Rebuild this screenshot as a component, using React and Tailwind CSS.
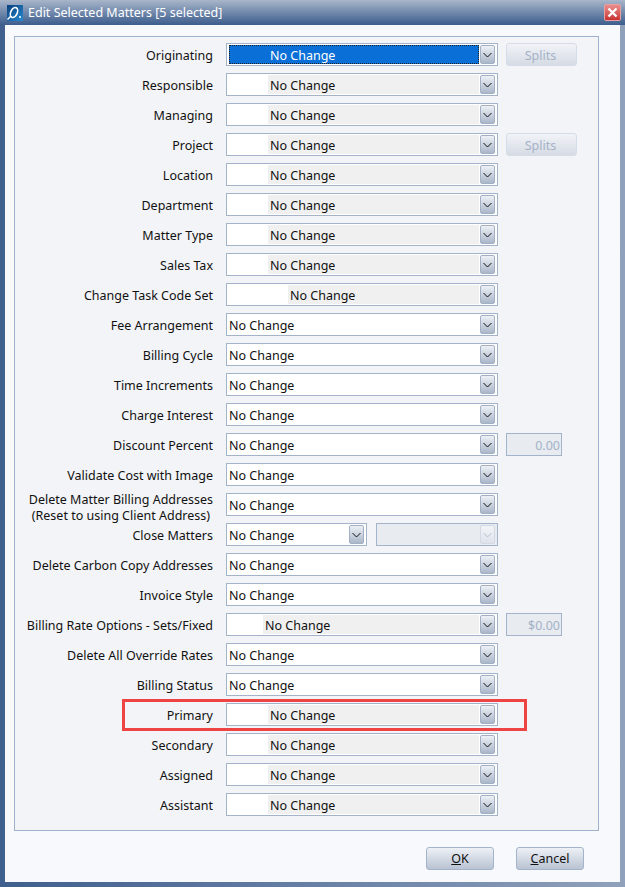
const rows = [
  { label: "Originating", text: "No Change", kind: "selected", extra: "splits" },
  { label: "Responsible", text: "No Change", kind: "gray" },
  { label: "Managing", text: "No Change", kind: "gray" },
  { label: "Project", text: "No Change", kind: "gray", extra: "splits" },
  { label: "Location", text: "No Change", kind: "gray" },
  { label: "Department", text: "No Change", kind: "gray" },
  { label: "Matter Type", text: "No Change", kind: "gray" },
  { label: "Sales Tax", text: "No Change", kind: "gray" },
  { label: "Change Task Code Set", text: "No Change", kind: "grayWide" },
  { label: "Fee Arrangement", text: "No Change" },
  { label: "Billing Cycle", text: "No Change" },
  { label: "Time Increments", text: "No Change" },
  { label: "Charge Interest", text: "No Change" },
  { label: "Discount Percent", text: "No Change", extra: "0.00" },
  { label: "Validate Cost with Image", text: "No Change" },
  { label: "Delete Matter Billing Addresses", label2: "(Reset to using Client Address)", text: "No Change" },
  { label: "Close Matters", text: "No Change", split: true },
  { label: "Delete Carbon Copy Addresses", text: "No Change" },
  { label: "Invoice Style", text: "No Change" },
  { label: "Billing Rate Options - Sets/Fixed", text: "No Change", kind: "grayNarrow", extra: "$0.00" },
  { label: "Delete All Override Rates", text: "No Change" },
  { label: "Billing Status", text: "No Change" },
  { label: "Primary", text: "No Change", kind: "gray", marked: true },
  { label: "Secondary", text: "No Change", kind: "gray" },
  { label: "Assigned", text: "No Change", kind: "gray" },
  { label: "Assistant", text: "No Change", kind: "gray" },
];

function Arrow({ disabled }) {
  return (
    <div
      className={
        disabled
          ? "w-[15px] h-[19px] shrink-0 rounded-[2px] border border-[#d3d9e2] bg-gradient-to-b from-[#f2f4f7] to-[#dfe3ea] flex items-center justify-center"
          : "w-[15px] h-[19px] shrink-0 rounded-[2px] border border-[#a3b0c4] bg-gradient-to-b from-[#eef1f6] to-[#aab6c9] flex items-center justify-center"
      }
    >
      <svg width="9" height="6" viewBox="0 0 9 6" fill="none">
        <path d="M0.5 1 L4.5 5 L8.5 1" stroke={disabled ? "#b8c0cc" : "#111"} strokeWidth="1" />
      </svg>
    </div>
  );
}

function Value({ row }) {
  if (row.kind === "selected") {
    return (
      <div className="flex-1 h-[19px] ml-[2px] bg-[#0a6fd6] text-white border border-dotted border-[#222] pl-[40px] leading-[19px]">
        {row.text}
      </div>
    );
  }
  if (row.kind === "gray") {
    return (
      <div className="flex-1 h-[19px] ml-[41px] bg-[#f0f0f0] pl-[2px] leading-[21px]">{row.text}</div>
    );
  }
  if (row.kind === "grayWide") {
    return (
      <div className="flex-1 h-[19px] ml-[61px] bg-[#f0f0f0] pl-[2px] leading-[21px]">{row.text}</div>
    );
  }
  if (row.kind === "grayNarrow") {
    return (
      <div className="flex-1 h-[19px] ml-[36px] bg-[#f0f0f0] pl-[2px] leading-[21px]">{row.text}</div>
    );
  }
  return <div className="flex-1 h-[19px] ml-[2px] leading-[21px]">{row.text}</div>;
}

function Select({ row, width }) {
  return (
    <div className={`${width} h-[23px] shrink-0 border border-[#a3b3c9] bg-white flex items-center pr-[2px] gap-[1px]`}>
      <Value row={row} />
      <Arrow />
    </div>
  );
}

function Extra({ value }) {
  if (value === "splits") {
    return (
      <div className="w-[71px] h-[23px] rounded-[3px] border border-[#d5dde8] bg-gradient-to-b from-[#f1f3f7] to-[#d6dbe4] text-[#a4b2c7] text-center pr-[2px] leading-[23px]">
        Splits
      </div>
    );
  }
  if (value) {
    return (
      <div className="w-[56px] h-[23px] border border-[#a3b3c9] bg-[#e8ebf0] text-[#a4b2c7] text-right pr-[1px] leading-[23px]">
        {value}
      </div>
    );
  }
  return null;
}

function Row({ row }) {
  return (
    <div className="relative flex items-center h-[23px]">
      <div className={row.label2 ? "w-[198px] shrink-0 text-right whitespace-nowrap pt-[6px]" : "w-[198px] shrink-0 text-right whitespace-nowrap pt-[4px]"}>
        {row.label2 ? (
          <div className="flex flex-col items-end leading-[16px]">
            <span className="text-center">
              {row.label}
              <br />
              {row.label2}
            </span>
          </div>
        ) : (
          row.label
        )}
      </div>
      <div className="ml-[13px] flex items-center gap-[8px]">
        {row.split ? (
          <>
            <Select row={row} width="w-[141px]" />
            <div className="w-[122px] h-[23px] ml-[1px] border border-[#a3b3c9] bg-[#e8ebf0] flex items-center justify-end pr-[2px]">
              <Arrow disabled />
            </div>
          </>
        ) : (
          <>
            <Select row={row} width="w-[272px]" />
            <Extra value={row.extra} />
          </>
        )}
      </div>
      {row.marked && (
        <div className="absolute left-[107px] top-[-4px] w-[405px] h-[32px] border-[3px] border-[#ef4444] pointer-events-none" />
      )}
    </div>
  );
}

function DialogButton({ mark, rest }) {
  return (
    <div className="w-[68px] h-[23px] rounded-[3px] border border-[#a3b3c9] bg-gradient-to-b from-[#eef1f6] to-[#b9c3d3] text-[#111] text-center leading-[21px]">
      <span className="underline">{mark}</span>
      {rest}
    </div>
  );
}

export default function App() {
  return (
    <div className="w-[625px] h-[887px] flex flex-col overflow-hidden bg-gradient-to-r from-[#3f5f8e] to-[#8fa1bb] font-['Noto_Sans',sans-serif] text-[12.5px] text-[#111]">
      <div className="h-[25px] shrink-0 flex items-center pl-[7px] pr-[4px] bg-gradient-to-b from-[#a9b6ca] to-[#3c5d8c]">
        <svg width="16" height="16" viewBox="0 0 16 16" className="shrink-0">
          <defs>
            <linearGradient id="logoBg" x1="0" y1="0" x2="1" y2="1">
              <stop offset="0" stopColor="#0b3f7c" />
              <stop offset="1" stopColor="#2a8ad0" />
            </linearGradient>
          </defs>
          <rect width="16" height="16" fill="url(#logoBg)" />
          <ellipse cx="7" cy="7.5" rx="3.2" ry="5.2" transform="rotate(25 7 7.5)" fill="none" stroke="#fff" strokeWidth="1.6" />
          <path d="M0.5 14.5 L4 11" stroke="#fff" strokeWidth="1.4" />
          <rect x="12" y="11" width="2" height="2" fill="#bfe3f7" />
        </svg>
        <span className="ml-[5px] text-white text-[12.5px] leading-[27px]">Edit Selected Matters [5 selected]</span>
        <div className="ml-auto w-[17px] h-[17px] border border-[#e8a0a0] rounded-[2px] bg-gradient-to-b from-[#e98d8d] to-[#c92f2f] flex items-center justify-center">
          <svg width="11" height="11" viewBox="0 0 11 11">
            <path d="M1.5 1.5 L9.5 9.5 M9.5 1.5 L1.5 9.5" stroke="#fff" strokeWidth="2.4" />
          </svg>
        </div>
      </div>
      <div className="mx-[5px] w-[615px] h-[857px] bg-[#f8f9fc] pl-[9px] pt-[11px]">
        <div className="w-[585px] h-[795px] border border-[#9fb2cb] bg-[#f3f4f7] pt-[6px] flex flex-col gap-[7px]">
          {rows.map((row) => (
            <Row key={row.label} row={row} />
          ))}
        </div>
        <div className="flex justify-end gap-[22px] mt-[16px] pr-[36px]">
          <DialogButton mark="O" rest="K" />
          <DialogButton mark="C" rest="ancel" />
        </div>
      </div>
    </div>
  );
}
